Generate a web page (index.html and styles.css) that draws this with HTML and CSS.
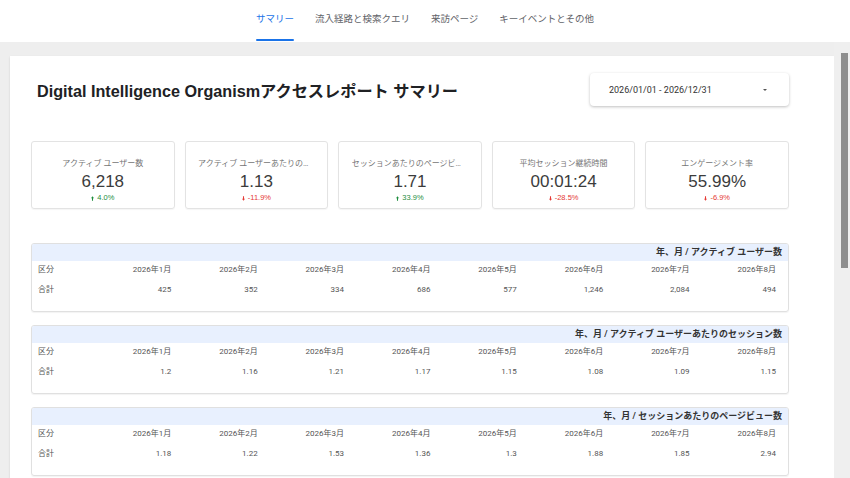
FILE: index.html
```html
<!DOCTYPE html>
<html lang="ja">
<head>
  <meta charset="UTF-8">
  <meta name="viewport" content="width=device-width, initial-scale=1.0">
  <title>アクセスレポート サマリー</title>
  <link rel="stylesheet" href="styles.css">
</head>
<body>
  <!-- タブ -->
  <nav class="tabs">
    <a class="tab active">サマリー</a>
    <a class="tab">流入経路と検索クエリ</a>
    <a class="tab">来訪ページ</a>
    <a class="tab">キーイベントとその他</a>
  </nav>

  <div class="main">
    <div class="page">
      <div class="report">
        <!-- ヘッダー -->
        <div class="report-header">
          <h1 class="report-title">Digital Intelligence Organismアクセスレポート サマリー</h1>
          <div class="date-picker">
            <span>2026/01/01 - 2026/12/31</span>
            <span class="caret"></span>
          </div>
        </div>

        <!-- スコアカード -->
        <div class="kpis">
          <div class="kpi">
            <div class="kpi-label">アクティブ ユーザー数</div>
            <div class="kpi-value">6,218</div>
            <div class="kpi-change up"><svg viewBox="0 0 4 6"><path d="M2 0 L4 2.6 H2.7 V6 H1.3 V2.6 H0 Z"/></svg>4.0%</div>
          </div>
          <div class="kpi">
            <div class="kpi-label">アクティブ ユーザーあたりのセッション数</div>
            <div class="kpi-value">1.13</div>
            <div class="kpi-change down"><svg viewBox="0 0 4 6"><path d="M2 6 L4 3.4 H2.7 V0 H1.3 V3.4 H0 Z"/></svg>-11.9%</div>
          </div>
          <div class="kpi">
            <div class="kpi-label">セッションあたりのページビュー数</div>
            <div class="kpi-value">1.71</div>
            <div class="kpi-change up"><svg viewBox="0 0 4 6"><path d="M2 0 L4 2.6 H2.7 V6 H1.3 V2.6 H0 Z"/></svg>33.9%</div>
          </div>
          <div class="kpi">
            <div class="kpi-label">平均セッション継続時間</div>
            <div class="kpi-value">00:01:24</div>
            <div class="kpi-change down"><svg viewBox="0 0 4 6"><path d="M2 6 L4 3.4 H2.7 V0 H1.3 V3.4 H0 Z"/></svg>-28.5%</div>
          </div>
          <div class="kpi">
            <div class="kpi-label">エンゲージメント率</div>
            <div class="kpi-value">55.99%</div>
            <div class="kpi-change down"><svg viewBox="0 0 4 6"><path d="M2 6 L4 3.4 H2.7 V0 H1.3 V3.4 H0 Z"/></svg>-6.9%</div>
          </div>
        </div>

        <!-- 月別テーブル -->
        <div class="tables">
          <div class="pivot">
            <div class="pivot-title">年、月 / アクティブ ユーザー数</div>
            <div class="pivot-grid">
              <span class="label">区分</span>
              <span>2026年1月</span><span>2026年2月</span><span>2026年3月</span><span>2026年4月</span>
              <span>2026年5月</span><span>2026年6月</span><span>2026年7月</span><span>2026年8月</span>
              <span class="label">合計</span>
              <span>425</span><span>352</span><span>334</span><span>686</span>
              <span>577</span><span>1,246</span><span>2,084</span><span>494</span>
            </div>
          </div>

          <div class="pivot">
            <div class="pivot-title">年、月 / アクティブ ユーザーあたりのセッション数</div>
            <div class="pivot-grid">
              <span class="label">区分</span>
              <span>2026年1月</span><span>2026年2月</span><span>2026年3月</span><span>2026年4月</span>
              <span>2026年5月</span><span>2026年6月</span><span>2026年7月</span><span>2026年8月</span>
              <span class="label">合計</span>
              <span>1.2</span><span>1.16</span><span>1.21</span><span>1.17</span>
              <span>1.15</span><span>1.08</span><span>1.09</span><span>1.15</span>
            </div>
          </div>

          <div class="pivot">
            <div class="pivot-title">年、月 / セッションあたりのページビュー数</div>
            <div class="pivot-grid">
              <span class="label">区分</span>
              <span>2026年1月</span><span>2026年2月</span><span>2026年3月</span><span>2026年4月</span>
              <span>2026年5月</span><span>2026年6月</span><span>2026年7月</span><span>2026年8月</span>
              <span class="label">合計</span>
              <span>1.18</span><span>1.22</span><span>1.53</span><span>1.36</span>
              <span>1.3</span><span>1.88</span><span>1.85</span><span>2.94</span>
            </div>
          </div>
        </div>
      </div>
    </div>

    <!-- スクロールバー -->
    <div class="scrollbar">
      <div class="scroll-thumb"></div>
    </div>
  </div>
</body>
</html>
```

FILE: styles.css
```css
/* 全体 */
body {
  margin: 0;
  padding: 0;
  overflow: hidden;
  font-family: Roboto, "Noto Sans CJK JP", sans-serif;
  color: #333;
  background: #eeeeee;
}

/* タブ */
.tabs {
  height: 42px;
  background: #fff;
  display: flex;
  justify-content: center;
  gap: 1px;
}

.tab {
  position: relative;
  padding: 0 10px;
  line-height: 38px;
  font-size: 9.5px;
  color: #5f6368;
  cursor: pointer;
}

.tab.active {
  color: #1a73e8;
}

.tab.active::after {
  content: "";
  position: absolute;
  left: 10px;
  right: 10px;
  bottom: 1px;
  height: 2px;
  border-radius: 2px;
  background: #1a73e8;
}

/* メイン */
.main {
  display: flex;
  height: 436px;
  overflow: hidden;
}

.page {
  flex: 1;
  padding: 14px 0 0 10px;
}

.report {
  background: #fff;
  height: 100%;
  padding: 17px 45px 0 21px;
  box-sizing: border-box;
  box-shadow: 0 1px 2px rgba(0, 0, 0, 0.12);
}

/* スクロールバー */
.scrollbar {
  width: 16px;
  background: #efefef;
  padding-left: 7px;
  box-sizing: border-box;
}

.scroll-thumb {
  width: 7px;
  height: 215px;
  margin-top: 11px;
  background: #8e8e8e;
}

/* ヘッダー */
.report-header {
  display: flex;
  justify-content: space-between;
  align-items: center;
  height: 33px;
}

.report-title {
  margin: 0;
  padding-left: 6px;
  font-family: "Liberation Sans", "Noto Sans CJK JP", sans-serif;
  font-size: 16.2px;
  font-weight: 700;
  color: #202124;
}

.date-picker {
  width: 199px;
  height: 33px;
  box-sizing: border-box;
  display: flex;
  align-items: center;
  justify-content: space-between;
  padding: 0 22px 0 19px;
  font-size: 9px;
  color: #333;
  border-radius: 4px;
  box-shadow: 0 1px 3px rgba(0, 0, 0, 0.25);
}

.caret {
  width: 0;
  height: 0;
  border-left: 2px solid transparent;
  border-right: 2px solid transparent;
  border-top: 2px solid #555;
}

/* スコアカード */
.kpis {
  display: grid;
  grid-template-columns: repeat(5, minmax(0, 1fr));
  gap: 10px;
  margin-top: 35px;
}

.kpi {
  height: 68px;
  min-width: 0;
  box-sizing: border-box;
  border: 1px solid #e3e3e3;
  border-radius: 3px;
  text-align: center;
  padding: 16px 12.5px 0;
  box-shadow: 0 1px 1px rgba(0, 0, 0, 0.04);
}

.kpi-label {
  font-size: 8px;
  line-height: 12px;
  color: #757575;
  white-space: nowrap;
  overflow: hidden;
  text-overflow: ellipsis;
}

.kpi-value {
  font-family: "Liberation Sans", Arial, sans-serif;
  font-size: 17px;
  line-height: 20px;
  margin-top: 2px;
  color: #3c3c3c;
}

.kpi-change {
  font-family: "Liberation Sans", Arial, sans-serif;
  font-size: 7.5px;
  line-height: 10px;
  margin-top: 1px;
  display: flex;
  justify-content: center;
  align-items: center;
  gap: 3px;
}

.kpi-change svg {
  width: 3px;
  height: 5px;
}

.kpi-change.up {
  color: #1e8e3e;
  fill: #1e8e3e;
}

.kpi-change.down {
  color: #e53935;
  fill: #e53935;
}

/* 月別テーブル */
.tables {
  display: flex;
  flex-direction: column;
  gap: 13px;
  margin-top: 34px;
}

.pivot {
  border: 1px solid #e0e0e0;
  border-radius: 3px;
  box-shadow: 0 1px 1px rgba(0, 0, 0, 0.05);
  overflow: hidden;
}

.pivot-title {
  height: 17px;
  line-height: 17px;
  background: #e8f0fe;
  text-align: right;
  padding-right: 6px;
  font-size: 9px;
  font-weight: 700;
  color: #333;
}

.pivot-grid {
  display: grid;
  grid-template-columns: 1fr repeat(8, 86.4px);
  row-gap: 8px;
  padding: 3px 12px 15px 6px;
  font-size: 8px;
  line-height: 12px;
  color: #555;
}

.pivot-grid span {
  text-align: right;
}

.pivot-grid .label {
  text-align: left;
}
```
